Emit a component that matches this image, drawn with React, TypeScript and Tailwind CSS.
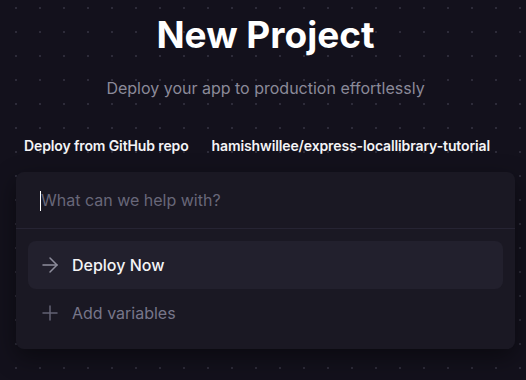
import { ArrowRight, Plus } from 'lucide-react';

export default function App() {
  return (
    <div
      className="w-[526px] h-[380px] overflow-hidden bg-[#13111c] bg-[radial-gradient(circle,#2d2b39_1px,transparent_1.4px)] bg-[length:24px_24px] bg-[position:4px_-4px]"
      style={{ fontFamily: 'Inter, "Noto Sans", sans-serif' }}
    >
      <div className="ml-4 mr-[11px]">
        {/* Heading */}
        <div className="pt-[15px] text-center">
          <h1 className="text-[37px] leading-[40px] font-bold text-white">New Project</h1>
          <p className="mt-[21px] text-base leading-6 text-[#8b8a99]">Deploy your app to production effortlessly</p>
        </div>

        {/* Source */}
        <div className="mt-9 pl-2 flex items-center gap-[23px] text-sm leading-5 font-semibold tracking-[-0.12px] text-[#f4f4f6]">
          <span>Deploy from GitHub repo</span>
          <span>hamishwillee/express-locallibrary-tutorial</span>
        </div>

        {/* Card */}
        <div className="mt-4 rounded-lg bg-[#1a1823] shadow-[0_8px_24px_rgba(0,0,0,0.45)]">
          <div className="h-[57px] pl-6 flex items-center border-b border-[#262433]">
            <span className="w-px h-[20px] bg-white mt-[1px]" />
            <span className="text-base text-[#686779]">What can we help with?</span>
          </div>
          <div className="p-3">
            <div className="h-12 rounded-lg bg-[#22202d] flex items-center pl-[10px] gap-[10px]">
              <ArrowRight size={24} strokeWidth={1.5} className="text-[#8e8d9c]" />
              <span className="text-base font-medium text-[#f4f4f6]">Deploy Now</span>
            </div>
            <div className="h-12 flex items-center pl-[10px] gap-[10px]">
              <Plus size={24} strokeWidth={1.5} className="text-[#636274]" />
              <span className="text-base text-[#77768a]">Add variables</span>
            </div>
          </div>
        </div>
      </div>
    </div>
  );
}
